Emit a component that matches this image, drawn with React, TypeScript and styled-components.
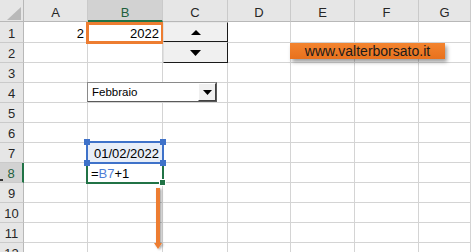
import React from 'react';
import styled, { createGlobalStyle } from 'styled-components';

const GlobalStyle = createGlobalStyle`
  html, body { margin: 0; padding: 0; background: #fff; }
  body {
    width: 471px; height: 252px; overflow: hidden;
    font-family: "Liberation Sans", Arial, sans-serif;
  }
`;

const LETTERS = ['A', 'B', 'C', 'D', 'E', 'F', 'G'];
const ACTIVE_COL = 'B';
const ACTIVE_ROW = 8;

const Sheet = styled.div`
  position: relative;
  display: grid;
  grid-template-columns: 24px 64px 75px 65px 63px 64px 64px 1fr;
  grid-template-rows: 22px 21px repeat(11, 20px);
  width: 471px;
  height: 252px;
  overflow: hidden;
  font-size: 13px;
  color: #000;
`;

const Corner = styled.div`
  background: #e6e6e6;
  border-right: 1px solid #b8b8b8;
  border-bottom: 1px solid #b8b8b8;
  position: relative;
  svg { position: absolute; left: 7px; top: 7px; }
`;

const ColHeader = styled.div<{ $active?: boolean }>`
  box-sizing: border-box;
  display: flex;
  align-items: flex-end;
  justify-content: center;
  padding-bottom: ${(p) => (p.$active ? 0 : 1)}px;
  background: ${(p) => (p.$active ? '#d2d2d2' : '#e6e6e6')};
  color: ${(p) => (p.$active ? '#1f5f3c' : '#262626')};
  border-right: 1px solid #cacaca;
  border-bottom: ${(p) => (p.$active ? '2px solid #217346' : '1px solid #b8b8b8')};
`;

const RowHeader = styled.div<{ $active?: boolean }>`
  box-sizing: border-box;
  display: flex;
  align-items: flex-end;
  justify-content: center;
  padding-bottom: 1px;
  background: ${(p) => (p.$active ? '#d2d2d2' : '#e6e6e6')};
  color: ${(p) => (p.$active ? '#1f5f3c' : '#262626')};
  border-right: ${(p) => (p.$active ? '2px solid #217346' : '1px solid #b8b8b8')};
  border-bottom: 1px solid #cacaca;
`;

const Cell = styled.div<{ $align?: 'left' | 'right'; $tint?: boolean }>`
  box-sizing: border-box;
  display: flex;
  align-items: flex-end;
  justify-content: ${(p) => (p.$align === 'right' ? 'flex-end' : 'flex-start')};
  padding: 0 3px 1px 3px;
  white-space: nowrap;
  overflow: visible;
  background: ${(p) => (p.$tint ? '#e8eef8' : '#fff')};
  border-right: 1px solid #d4d4d4;
  border-bottom: 1px solid #d4d4d4;
`;

const RefText = styled.span`
  color: #4f7fd6;
`;

const Highlight = styled.div`
  position: absolute;
  left: 86px;
  top: 22px;
  width: 78px;
  height: 22px;
  box-sizing: border-box;
  border: 3px solid #ed7d31;
`;

const Spin = styled.div`
  position: absolute;
  left: 163px;
  top: 22px;
  width: 65px;
  display: flex;
  flex-direction: column;
`;

const SpinButton = styled.div<{ $h: number }>`
  box-sizing: border-box;
  height: ${(p) => p.$h}px;
  display: flex;
  align-items: center;
  justify-content: center;
  background: #f0f0f0;
  border-top: 1px solid #e8e8e8;
  border-left: 1px solid #e0e0e0;
  border-right: 1px solid #1a1a1a;
  border-bottom: 1px solid #1a1a1a;
`;

const Combo = styled.div`
  position: absolute;
  left: 87px;
  top: 82px;
  width: 130px;
  height: 20px;
  box-sizing: border-box;
  display: flex;
  align-items: stretch;
  background: #fff;
  border-top: 1px solid #8a8a8a;
  border-left: 1px solid #8a8a8a;
  border-right: 1px solid #5a5a5a;
  border-bottom: 1px solid #5a5a5a;
`;

const ComboText = styled.div`
  flex: 1;
  display: flex;
  align-items: center;
  padding-left: 4px;
  font-size: 11.5px;
  color: #000;
`;

const ComboButton = styled.div`
  box-sizing: border-box;
  width: 18px;
  display: flex;
  align-items: center;
  justify-content: center;
  background: #f0f0f0;
  border-top: 1px solid #fff;
  border-left: 1px solid #fff;
  border-right: 1px solid #404040;
  border-bottom: 1px solid #404040;
`;

const Banner = styled.div`
  position: absolute;
  left: 290px;
  top: 43px;
  width: 155px;
  height: 16px;
  display: flex;
  align-items: center;
  justify-content: center;
  background: linear-gradient(#f3842f, #e8711d);
  box-shadow: 2px 3px 4px rgba(0, 0, 0, 0.38);
  font-size: 14px;
  color: #1a1a1a;
`;

const RangeBox = styled.div`
  position: absolute;
  left: 86px;
  top: 141px;
  width: 78px;
  height: 23px;
  box-sizing: border-box;
  border: 2px solid #3f72c9;
`;

const Handle = styled.div<{ $x: 'l' | 'r'; $y: 't' | 'b' }>`
  position: absolute;
  width: 6px;
  height: 6px;
  background: #3f72c9;
  ${(p) => (p.$x === 'l' ? 'left: -4px;' : 'right: -4px;')}
  ${(p) => (p.$y === 't' ? 'top: -4px;' : 'bottom: -4px;')}
`;

const ActiveBox = styled.div`
  position: absolute;
  left: 86px;
  top: 162px;
  width: 78px;
  height: 22px;
  box-sizing: border-box;
  border: 2px solid #217346;
`;

const FillHandle = styled.div`
  position: absolute;
  right: -4px;
  bottom: -4px;
  width: 5px;
  height: 5px;
  background: #217346;
  border: 1px solid #fff;
`;

const ArrowLayer = styled.svg`
  position: absolute;
  left: 148px;
  top: 184px;
  overflow: visible;
`;

const CursorMark = styled.div`
  position: absolute;
  left: 0;
  top: 179px;
  width: 3px;
  height: 2px;
  background: #333;
`;

type CellData = { text: React.ReactNode; align: 'left' | 'right'; tint?: boolean };

const DATA: Record<string, CellData> = {
  A1: { text: '2', align: 'right' },
  B1: { text: '2022', align: 'right' },
  B7: { text: '01/02/2022', align: 'right', tint: true },
  B8: {
    text: (
      <>
        =<RefText>B7</RefText>+1
      </>
    ),
    align: 'left',
  },
};

const Tri = ({ dir, w, h }: { dir: 'up' | 'down'; w: number; h: number }) => (
  <svg width={w} height={h} viewBox={`0 0 ${w} ${h}`}>
    <polygon
      points={dir === 'up' ? `0,${h} ${w},${h} ${w / 2},0` : `0,0 ${w},0 ${w / 2},${h}`}
      fill="#000"
    />
  </svg>
);

export default function App() {
  const rows = Array.from({ length: 12 }, (_, i) => i + 1);
  return (
    <>
      <GlobalStyle />
      <Sheet>
        <Corner>
          <svg width="14" height="13" viewBox="0 0 14 13">
            <polygon points="14,0 14,13 0,13" fill="#b9b9b9" />
          </svg>
        </Corner>
        {LETTERS.map((l) => (
          <ColHeader key={l} $active={l === ACTIVE_COL}>
            {l}
          </ColHeader>
        ))}
        {rows.map((r) => (
          <React.Fragment key={r}>
            <RowHeader $active={r === ACTIVE_ROW}>{r}</RowHeader>
            {LETTERS.map((l) => {
              const d = DATA[`${l}${r}`];
              return (
                <Cell key={l} $align={d?.align} $tint={d?.tint}>
                  {d?.text}
                </Cell>
              );
            })}
          </React.Fragment>
        ))}

        <Highlight />

        <Spin>
          <SpinButton $h={20}>
            <Tri dir="up" w={10} h={5} />
          </SpinButton>
          <SpinButton $h={21}>
            <Tri dir="down" w={11} h={6} />
          </SpinButton>
        </Spin>

        <Combo>
          <ComboText>Febbraio</ComboText>
          <ComboButton>
            <Tri dir="down" w={9} h={5} />
          </ComboButton>
        </Combo>

        <Banner>www.valterborsato.it</Banner>

        <ActiveBox>
          <FillHandle />
        </ActiveBox>
        <RangeBox>
          <Handle $x="l" $y="t" />
          <Handle $x="r" $y="t" />
          <Handle $x="l" $y="b" />
          <Handle $x="r" $y="b" />
        </RangeBox>

        <ArrowLayer width="20" height="68" viewBox="0 0 20 68">
          <defs>
            <filter id="sh" x="-50%" y="-10%" width="200%" height="130%">
              <feDropShadow dx="1.5" dy="1" stdDeviation="1" floodColor="#000" floodOpacity="0.35" />
            </filter>
          </defs>
          <g filter="url(#sh)">
            <line x1="10" y1="4" x2="10" y2="60" stroke="#ed7d31" strokeWidth="4" />
            <polygon points="6,59 14,59 10,65" fill="#ed7d31" />
          </g>
        </ArrowLayer>

        <CursorMark />
      </Sheet>
    </>
  );
}
